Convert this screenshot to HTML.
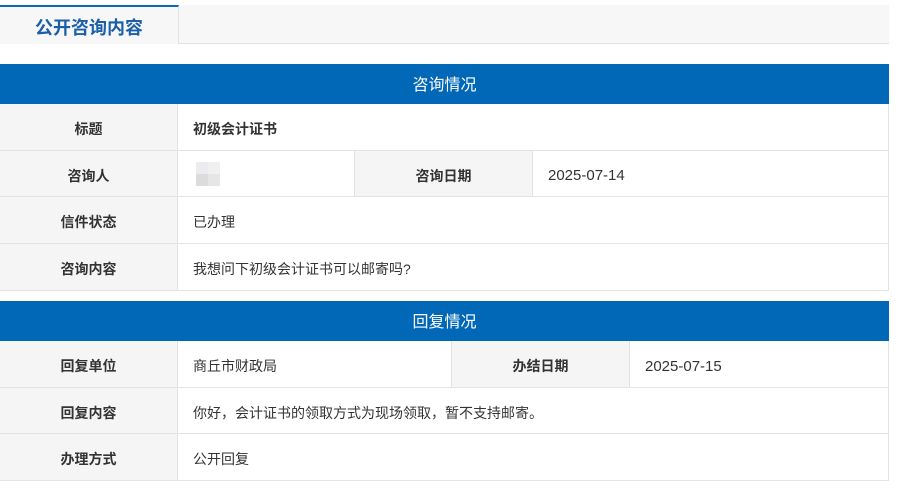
<!DOCTYPE html>
<html><head><meta charset="utf-8"><style>
*{margin:0;padding:0;box-sizing:border-box}
body{width:898px;height:495px;background:#fff;font-family:"Liberation Sans","Microsoft YaHei","Noto Sans CJK SC",sans-serif;font-size:14px;color:#333;position:relative;overflow:hidden}
.tabbar{position:absolute;left:0;top:5px;width:889px;height:39px;background:#f7f7f7;border-bottom:1px solid #e2e2e2}
.tab{position:absolute;left:0;top:0;width:179px;height:39px;border-top:2px solid #0a67b5;border-right:1px solid #e2e2e2;background:#f7f7f7;color:#1a5fa8;font-size:18px;font-weight:bold;text-align:center;line-height:42px}
.hd{position:absolute;left:0;width:889px;height:40px;background:#0068b6;color:#fff;font-size:16px;text-align:center;line-height:44px}
.c{position:absolute;border-bottom:1px solid #e3e3e3;border-right:1px solid #e3e3e3;display:flex;align-items:center;padding-top:4px}
.l{background:#f5f5f5;justify-content:center;font-weight:bold}
.v{background:#fff;padding-left:15px}
.d{font-size:15px}
.sq{position:absolute;width:12px;height:12px}
</style></head><body>
<div class="tabbar"><div class="tab">公开咨询内容</div></div>

<div class="hd" style="top:64px">咨询情况</div>
<div class="c l" style="left:0;top:104px;width:178px;height:47px">标题</div>
<div class="c v" style="left:178px;top:104px;width:711px;height:47px;font-weight:bold">初级会计证书</div>
<div class="c l" style="left:0;top:151px;width:178px;height:46px">咨询人</div>
<div class="c v" style="left:178px;top:151px;width:177px;height:46px"></div>
<div class="c l" style="left:355px;top:151px;width:178px;height:46px">咨询日期</div>
<div class="c v d" style="left:533px;top:151px;width:356px;height:46px">2025-07-14</div>
<div class="c l" style="left:0;top:197px;width:178px;height:47px">信件状态</div>
<div class="c v" style="left:178px;top:197px;width:711px;height:47px">已办理</div>
<div class="c l" style="left:0;top:244px;width:178px;height:47px">咨询内容</div>
<div class="c v" style="left:178px;top:244px;width:711px;height:47px">我想问下初级会计证书可以邮寄吗?</div>
<div class="sq" style="left:196px;top:162px;background:#ececf0"></div>
<div class="sq" style="left:208px;top:162px;background:#f0f0f0"></div>
<div class="sq" style="left:196px;top:174px;background:#dcdcdc"></div>
<div class="sq" style="left:208px;top:174px;background:#e6e6e6"></div>

<div class="hd" style="top:301px">回复情况</div>
<div class="c l" style="left:0;top:341px;width:178px;height:47px">回复单位</div>
<div class="c v" style="left:178px;top:341px;width:274px;height:47px">商丘市财政局</div>
<div class="c l" style="left:452px;top:341px;width:178px;height:47px">办结日期</div>
<div class="c v d" style="left:630px;top:341px;width:259px;height:47px">2025-07-15</div>
<div class="c l" style="left:0;top:388px;width:178px;height:46px">回复内容</div>
<div class="c v" style="left:178px;top:388px;width:711px;height:46px">你好，会计证书的领取方式为现场领取，暂不支持邮寄。</div>
<div class="c l" style="left:0;top:434px;width:178px;height:47px">办理方式</div>
<div class="c v" style="left:178px;top:434px;width:711px;height:47px">公开回复</div>
</body></html>
